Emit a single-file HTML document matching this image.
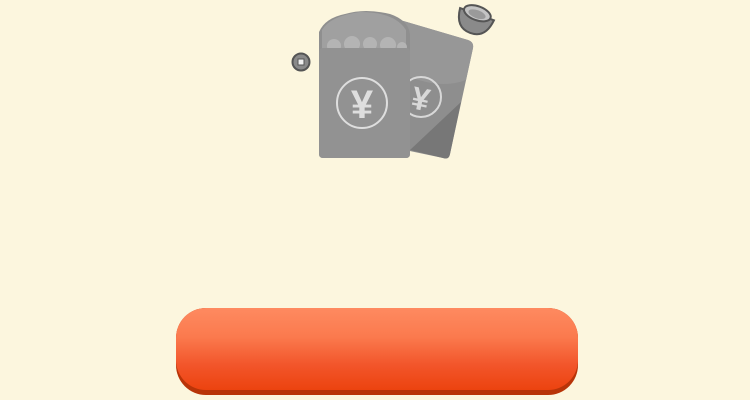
<!DOCTYPE html>
<html><head><style>
html,body{margin:0;padding:0;width:750px;height:400px;background:#fcf6de;overflow:hidden;}
.btn{position:absolute;left:176px;top:308px;width:402px;height:87px;border-radius:30px;background:#b83408;}
.btn2{position:absolute;left:176px;top:308px;width:402px;height:82px;border-radius:30px;background:linear-gradient(#fe8a60 0%,#fb7a4e 35%,#f2552a 70%,#ec430f 100%);}
</style></head><body>
<svg width="750" height="400" style="position:absolute;left:0;top:0">
  <!-- back envelope -->
  <path d="M400 20 L468 40 Q474 42 473 48 L450 154 Q449 160 443 158 L405 150 Z" fill="#8e8e8e"/>
  <path d="M400 20 L468 40 Q474 42 473 48 L466 80 Q440 90 405 75 Z" fill="#979797"/>
  <path d="M461 102 L450 154 Q449 160 443 158 L410 150 Z" fill="#777"/>
  <circle cx="421" cy="97" r="20" fill="none" stroke="#d8d8d8" stroke-width="2"/>
  <text x="421" y="110" font-family="Liberation Sans, sans-serif" font-weight="bold" font-size="32" fill="#d8d8d8" text-anchor="middle" transform="rotate(12 421 97)">¥</text>
  <!-- front envelope -->
  <path d="M319 32 Q325 18 345 14 Q365 8 390 14 Q408 20 410 34 V154 Q410 158 406 158 H323 Q319 158 319 154 Z" fill="#8f8f8f"/>
  <path d="M322 30 Q330 16 360 12 Q395 12 406 30 L406 50 H322 Z" fill="#a0a0a0"/>
  <g fill="#b4b4b4">
    <circle cx="334" cy="46" r="7"/><circle cx="352" cy="44" r="8"/><circle cx="370" cy="44" r="7"/><circle cx="388" cy="45" r="8"/><circle cx="402" cy="47" r="5"/>
  </g>
  <rect x="319" y="48" width="91" height="110" rx="4" fill="#929292"/>
  <circle cx="362" cy="103" r="25" fill="none" stroke="#dedede" stroke-width="2"/>
  <text x="362" y="118" font-family="Liberation Sans, sans-serif" font-weight="bold" font-size="40" fill="#dedede" text-anchor="middle">¥</text>
  <!-- coin -->
  <circle cx="301" cy="62" r="8.5" fill="#8a8a8a" stroke="#555" stroke-width="2"/>
  <rect x="298" y="59" width="6" height="6" fill="#f0f0f0" stroke="#555" stroke-width="1"/>
  <!-- ingot -->
  <g transform="rotate(20 476 17)">
    <path d="M458 14 Q460 34 476 34 Q492 34 494 14 Z" fill="#8a8a8a" stroke="#555" stroke-width="2"/>
    <ellipse cx="476" cy="13" rx="14" ry="7" fill="#c4c4c4" stroke="#555" stroke-width="2"/>
    <ellipse cx="476" cy="14" rx="9" ry="4" fill="#9a9a9a"/>
  </g>
</svg>
<div class="btn"></div><div class="btn2"></div>
</body></html>
